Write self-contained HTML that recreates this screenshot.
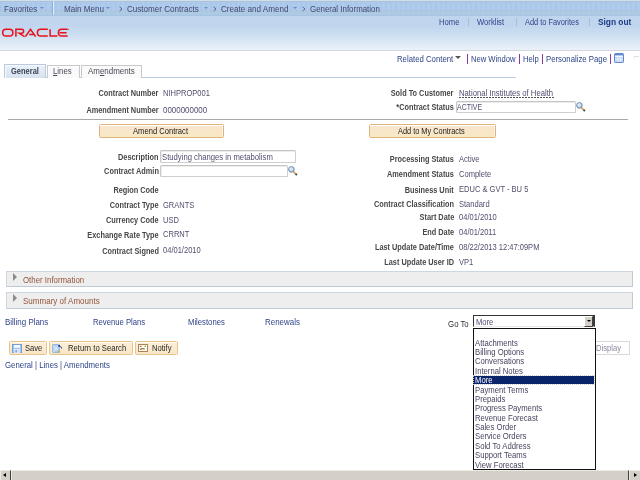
<!DOCTYPE html>
<html><head><meta charset="utf-8"><style>
html,body{margin:0;padding:0;background:#fff;width:640px;height:480px;overflow:hidden;position:relative}
.t{position:absolute;font-family:"Liberation Sans",sans-serif;white-space:nowrap}
.r{position:absolute;box-sizing:content-box}
.arr{position:absolute;width:0;height:0;border-left:2.2px solid transparent;border-right:2.2px solid transparent;border-top:2.2px solid #6a8dc4}
.arr2{position:absolute;width:0;height:0;border-left:3px solid transparent;border-right:3px solid transparent;border-top:3.5px solid #555}
.inp{position:absolute;box-sizing:border-box;border:1px solid #cfcfcf;border-top-color:#c4c4c4;border-left-color:#c8c8c8;background:#fff;border-radius:1.5px;box-shadow:inset 1px 1px 0 #ececec}
.btn{position:absolute;box-sizing:border-box;border:1px solid #e0b27e;background:linear-gradient(#f8e5cf,#f9e8c3);border-radius:1.5px;box-shadow:inset 0 1px 0 #fff,inset -1px 0 0 #fdf6e8}
.tb{position:absolute;box-sizing:border-box;border:1.5px solid #e6c48e;background:linear-gradient(#fcefd8,#f9e6c6);border-radius:1.5px;box-shadow:inset 0 1px 0 #fff8ee}
.sec{position:absolute;box-sizing:content-box;background:#eeeeee;border:1px solid #ccd5e0;border-right:1.5px solid #bfc8d6;border-bottom:1.5px solid #bfc8d6}
.tri{position:absolute;width:0;height:0;border-top:4.5px solid transparent;border-bottom:4.5px solid transparent;border-left:4.5px solid #8c8c8c}
.mag{position:absolute;width:9px;height:9px}
.mag:before{content:"";position:absolute;left:0;top:0;width:5px;height:5px;border-radius:50%;border:1px solid #4a7fb8;background:radial-gradient(circle at 35% 35%,#e8f4ff,#7fb2e0)}
.mag:after{content:"";position:absolute;left:5.5px;top:5px;width:4px;height:1.8px;background:#c88a3a;transform:rotate(45deg);transform-origin:0 0}
.sv{position:absolute;width:9px;height:8.5px;background:#6f9fd8;box-sizing:border-box;border:1px solid #4f7fc0}
.sv:before{content:"";position:absolute;left:1px;top:0;width:5px;height:3px;background:#e8f0fa}
.sv:after{content:"";position:absolute;left:2px;top:4.5px;width:3px;height:3px;background:#fff}
.rs{position:absolute;width:10px;height:10px}
.rs:before{content:"";position:absolute;left:0;top:1px;width:7px;height:7px;background:#9cc0e8;border:1px solid #5a86c0}
.rs:after{content:"";position:absolute;left:4px;top:4px;width:6px;height:2px;background:#444;transform:rotate(-45deg)}
.nt{position:absolute;width:9px;height:8px;box-sizing:border-box;border:1px solid #8a6a3a;background:#f4e4b8}
.nt:before{content:"";position:absolute;left:1px;top:2px;width:2px;height:1px;background:#333}
.nt:after{content:"";position:absolute;left:2px;top:4px;width:4px;height:1px;background:#333}
</style></head><body>
<div class="r" style="left:0px;top:0px;width:640px;height:1px;background:#cfdeea"></div>
<div class="r" style="left:0px;top:1px;width:640px;height:1px;background:#aac2da"></div>
<div class="r" style="left:0px;top:2px;width:640px;height:12.5px;background:linear-gradient(#afcbea 0,#acccee 40%,#b1c8ea 60%,#adcae4 75%,#adcae2 100%)"></div>
<div class="r" style="left:0px;top:2px;width:640px;height:11px;background-image:linear-gradient(90deg,rgba(150,160,220,0.2) 50%,transparent 50%);background-size:5px 3.5px;background-position:0 1.2px;-webkit-mask:linear-gradient(transparent 0 1.2px,#000 1.2px 2.2px,transparent 2.2px);-webkit-mask-size:100% 3.5px"></div>
<div class="r" style="left:0px;top:14.5px;width:640px;height:1.0px;background:#a9c4e2"></div>
<div class="t" style="left:4.328px;transform-origin:0 7.36px;top:4.94px;font-size:8.7px;line-height:8.7px;font-weight:normal;color:#444a70;transform:scale(0.93,1.0);">Favorites</div>
<div class="arr" style="left:40px;top:6.6px"></div><div class="r" style="left:52px;top:1px;width:1px;height:14px;background:#8eaed4"></div>
<div class="r" style="left:53px;top:1px;width:1px;height:14px;background:#e4eef8"></div>
<div class="t" style="left:63.628px;transform-origin:0 7.36px;top:4.94px;font-size:8.7px;line-height:8.7px;font-weight:normal;color:#444a70;transform:scale(0.93,1.0);">Main Menu</div>
<div class="arr" style="left:106px;top:6.6px"></div><svg class="r" style="left:118.8px;top:6px" width="4" height="6" viewBox="0 0 4 6"><path d="M0.5 0.8L3 3L0.5 5.2" fill="none" stroke="#4a5270" stroke-width="0.8"/></svg>
<div class="t" style="left:127.128px;transform-origin:0 7.36px;top:4.94px;font-size:8.7px;line-height:8.7px;font-weight:normal;color:#444a70;transform:scale(0.93,1.0);">Customer Contracts</div>
<div class="arr" style="left:204px;top:6.6px"></div><svg class="r" style="left:212.8px;top:6px" width="4" height="6" viewBox="0 0 4 6"><path d="M0.5 0.8L3 3L0.5 5.2" fill="none" stroke="#4a5270" stroke-width="0.8"/></svg>
<div class="t" style="left:220.628px;transform-origin:0 7.36px;top:4.94px;font-size:8.7px;line-height:8.7px;font-weight:normal;color:#444a70;transform:scale(0.93,1.0);">Create and Amend</div>
<div class="arr" style="left:293px;top:6.6px"></div><svg class="r" style="left:301.8px;top:6px" width="4" height="6" viewBox="0 0 4 6"><path d="M0.5 0.8L3 3L0.5 5.2" fill="none" stroke="#4a5270" stroke-width="0.8"/></svg>
<div class="t" style="left:309.636px;transform-origin:0 7.36px;top:4.94px;font-size:8.7px;line-height:8.7px;font-weight:normal;color:#444a70;transform:scale(0.91,1.0);">General Information</div>
<div class="r" style="left:0px;top:15.5px;width:640px;height:34.5px;background:linear-gradient(#bfd5ee 0,#c1d6ee 30%,#c9dcf0 50%,#d9e6f4 72%,#eaf1f9 100%)"></div>
<div class="r" style="left:0px;top:50px;width:640px;height:1px;background:#d3d7de"></div>
<svg class="r" style="left:0;top:24px" width="72" height="18" viewBox="0 0 72 18"><g fill="none" stroke="#e8101a" stroke-width="1.5"><rect x="2.7" y="5.35" width="10.2" height="6.6" rx="3.3"/><path d="M15.9 12.65V5.35H21.6A2 2 0 0 1 21.6 9.35H19.2L24.6 12.65"/><path d="M25.4 12.65L30.5 5.35L35.6 12.65M29.2 10.6H33.6"/><path d="M47.8 5.35H40.7A3.3 3.3 0 0 0 40.7 11.95H47.8"/><path d="M50.1 5.2V11.95H57.4"/><path d="M67.6 5.35H61.7A3.3 3.3 0 0 0 61.7 11.95H67.6M59.6 8.65H66.6"/></g><circle cx="68.6" cy="5.4" r="0.5" fill="#e3141c"/></svg>
<div class="t" style="left:438.64px;transform-origin:0 7.20px;top:18.30px;font-size:8.5px;line-height:8.5px;font-weight:normal;color:#2f4489;transform:scale(0.9,1.0);">Home</div>
<div class="r" style="left:468px;top:17.6px;width:1px;height:8.2px;background:#a9bed6"></div>
<div class="t" style="left:477.14px;transform-origin:0 7.20px;top:18.30px;font-size:8.5px;line-height:8.5px;font-weight:normal;color:#2f4489;transform:scale(0.9,1.0);">Worklist</div>
<div class="r" style="left:516px;top:17.6px;width:1px;height:8.2px;background:#a9bed6"></div>
<div class="t" style="left:525.3520000000001px;transform-origin:0 7.20px;top:18.30px;font-size:8.5px;line-height:8.5px;font-weight:normal;color:#2f4489;transform:scale(0.87,1.0);">Add to Favorites</div>
<div class="r" style="left:589px;top:17.6px;width:1px;height:8.2px;background:#a9bed6"></div>
<div class="t" style="left:597.608px;transform-origin:0 7.20px;top:18.30px;font-size:8.5px;line-height:8.5px;font-weight:bold;color:#1c3a86;transform:scale(0.98,1.0);">Sign out</div>
<div class="t" style="left:397.32px;transform-origin:0 6.94px;top:55.96px;font-size:8.2px;line-height:8.2px;font-weight:normal;color:#2f4489;transform:scale(0.95,1.0);">Related Content</div>
<div class="arr2" style="left:455.3px;top:56px"></div><div class="r" style="left:467px;top:54px;width:1px;height:10px;background:#8a3a9a"></div>
<div class="r" style="left:518.5px;top:54px;width:1.0px;height:10px;background:#8a3a9a"></div>
<div class="r" style="left:542px;top:54px;width:1px;height:10px;background:#8a3a9a"></div>
<div class="r" style="left:610px;top:54px;width:1px;height:10px;background:#8a3a9a"></div>
<div class="t" style="left:470.928px;transform-origin:0 6.94px;top:55.96px;font-size:8.2px;line-height:8.2px;font-weight:normal;color:#2f4489;transform:scale(0.93,1.0);">New Window</div>
<div class="t" style="left:522.8280000000001px;transform-origin:0 6.94px;top:55.96px;font-size:8.2px;line-height:8.2px;font-weight:normal;color:#2f4489;transform:scale(0.93,1.0);">Help</div>
<div class="t" style="left:546.22px;transform-origin:0 6.94px;top:55.96px;font-size:8.2px;line-height:8.2px;font-weight:normal;color:#2f4489;transform:scale(0.95,1.0);">Personalize Page</div>
<svg class="r" style="left:613.5px;top:52.5px" width="10" height="10" viewBox="0 0 10 10"><rect x="0.5" y="0.5" width="9" height="9" rx="0.8" fill="#c4d6f2" stroke="#5d88cf"/><rect x="1" y="1" width="8" height="1.6" fill="#5d88cf"/><rect x="1" y="2.6" width="8" height="1.2" fill="#fff"/><path d="M1 6.2H9M4 3.8V9M6.5 3.8V9" stroke="#eef4fc" stroke-width="0.8"/></svg>
<div class="r" style="left:634.2px;top:56px;width:4.5px;height:1px;background:#e2e2e2"></div>
<div class="r" style="left:634.2px;top:56px;width:0.7999999999999545px;height:2px;background:#e2e2e2"></div>
<div class="r" style="left:4px;top:77px;width:512px;height:1px;background:#bccae2"></div>
<div class="r" style="left:4px;top:63.5px;width:40px;height:13.5px;border:1px solid #b9c9de;border-bottom:none;background:linear-gradient(#eaf1f9,#d6e2f0);box-shadow:inset 1px 1px 0 #f6f9fd"></div>
<div class="t" style="left:11.12px;transform-origin:0 6.69px;top:68.31px;font-size:7.9px;line-height:7.9px;font-weight:bold;color:#3d4456;transform:scale(0.95,1.06);">General</div>
<div class="r" style="left:47px;top:65px;width:31px;height:12px;border:1px solid #c9c9c9;border-bottom:none;background:#fafafa;box-shadow:inset 1px 1px 0 #fff"></div>
<div class="t" style="left:53.419999999999995px;transform-origin:0 6.94px;top:68.06px;font-size:8.2px;line-height:8.2px;font-weight:normal;color:#4a4a5a;transform:scale(0.95,1.0);"><u>L</u>ines</div>
<div class="r" style="left:81px;top:65px;width:59px;height:12px;border:1px solid #c9c9c9;border-bottom:none;background:#fafafa"></div>
<div class="t" style="left:87.612px;transform-origin:0 6.94px;top:68.06px;font-size:8.2px;line-height:8.2px;font-weight:normal;color:#4a4a5a;transform:scale(0.97,1.0);">Am<u>e</u>ndments</div>
<div class="t" style="right:481.228px;text-align:right;transform-origin:100% 6.69px;top:89.71px;font-size:7.9px;line-height:7.9px;font-weight:bold;color:#474747;transform:scale(0.93,1.06);">Contract Number</div>
<div class="t" style="left:163.43200000000002px;transform-origin:0 6.94px;top:89.56px;font-size:8.2px;line-height:8.2px;font-weight:normal;color:#544d6e;transform:scale(0.92,1.0);">NIHPROP001</div>
<div class="t" style="right:481.228px;text-align:right;transform-origin:100% 6.69px;top:106.91px;font-size:7.9px;line-height:7.9px;font-weight:bold;color:#474747;transform:scale(0.93,1.06);">Amendment Number</div>
<div class="t" style="left:163.412px;transform-origin:0 6.94px;top:106.76px;font-size:8.2px;line-height:8.2px;font-weight:normal;color:#544d6e;transform:scale(0.97,1.0);">0000000000</div>
<div class="t" style="right:186.32799999999997px;text-align:right;transform-origin:100% 6.69px;top:89.71px;font-size:7.9px;line-height:7.9px;font-weight:bold;color:#474747;transform:scale(0.93,1.06);">Sold To Customer</div>
<div class="t" style="left:458.624px;transform-origin:0 6.94px;top:89.56px;font-size:8.2px;line-height:8.2px;font-weight:normal;color:#544d6e;transform:scale(0.94,1.0);">National Institutes of Health</div>
<div class="r" style="left:459px;top:97px;width:95px;height:1px;background:repeating-linear-gradient(90deg,#505050 0 2px,transparent 2px 3px)"></div>
<div class="t" style="right:186.32799999999997px;text-align:right;transform-origin:100% 6.69px;top:103.91px;font-size:7.9px;line-height:7.9px;font-weight:bold;color:#474747;transform:scale(0.93,1.06);">*Contract Status</div>
<div class="inp" style="left:455.5px;top:101.3px;width:120.3px;height:11.5px"></div>
<div class="t" style="left:456.66px;transform-origin:0 6.94px;top:103.76px;font-size:8.2px;line-height:8.2px;font-weight:normal;color:#544d6e;transform:scale(0.85,1.0);">ACTIVE</div>
<svg class="r" style="left:576.2px;top:101.8px" width="10" height="10" viewBox="0 0 10 10"><defs><radialGradient id="mg" cx="40%" cy="35%" r="70%"><stop offset="0" stop-color="#f2f8ff"/><stop offset="1" stop-color="#8fbde8"/></radialGradient></defs><path d="M5.6 5.8L8.4 8.6" stroke="#dca23a" stroke-width="1.7"/><path d="M7.6 7.8L8.9 9.1" stroke="#34467a" stroke-width="1.7"/><circle cx="3.4" cy="3.4" r="2.8" fill="url(#mg)" stroke="#6a7486" stroke-width="0.8"/></svg>
<div class="r" style="left:8px;top:119px;width:620px;height:1px;background:#a9a9a9"></div>
<div class="btn" style="left:99px;top:124px;width:125px;height:13.7px"></div>
<div class="t" style="left:133.028px;transform-origin:0 6.94px;top:127.56px;font-size:8.2px;line-height:8.2px;font-weight:normal;color:#222;transform:scale(0.93,1.0);">Amend Contract</div>
<div class="btn" style="left:369px;top:124px;width:127px;height:13.7px"></div>
<div class="t" style="left:398.34px;transform-origin:0 6.94px;top:127.56px;font-size:8.2px;line-height:8.2px;font-weight:normal;color:#222;transform:scale(0.9,1.0);">Add to My Contracts</div>
<div class="t" style="right:481.228px;text-align:right;transform-origin:100% 6.69px;top:153.51px;font-size:7.9px;line-height:7.9px;font-weight:bold;color:#474747;transform:scale(0.93,1.06);">Description</div>
<div class="inp" style="left:160px;top:150.2px;width:135.8px;height:12.6px"></div>
<div class="t" style="left:161.624px;transform-origin:0 6.94px;top:153.96px;font-size:8.2px;line-height:8.2px;font-weight:normal;color:#544d6e;transform:scale(0.94,1.0);">Studying changes in metabolism</div>
<div class="t" style="right:481.228px;text-align:right;transform-origin:100% 6.69px;top:168.41px;font-size:7.9px;line-height:7.9px;font-weight:bold;color:#474747;transform:scale(0.93,1.06);">Contract Admin</div>
<div class="inp" style="left:160px;top:165.2px;width:127.8px;height:12.3px"></div>
<svg class="r" style="left:288.4px;top:166.2px" width="10" height="10" viewBox="0 0 10 10"><defs><radialGradient id="mg" cx="40%" cy="35%" r="70%"><stop offset="0" stop-color="#f2f8ff"/><stop offset="1" stop-color="#8fbde8"/></radialGradient></defs><path d="M5.6 5.8L8.4 8.6" stroke="#dca23a" stroke-width="1.7"/><path d="M7.6 7.8L8.9 9.1" stroke="#34467a" stroke-width="1.7"/><circle cx="3.4" cy="3.4" r="2.8" fill="url(#mg)" stroke="#6a7486" stroke-width="0.8"/></svg>
<div class="t" style="right:481.228px;text-align:right;transform-origin:100% 6.69px;top:186.51px;font-size:7.9px;line-height:7.9px;font-weight:bold;color:#474747;transform:scale(0.93,1.06);">Region Code</div>
<div class="t" style="right:481.228px;text-align:right;transform-origin:100% 6.69px;top:201.91px;font-size:7.9px;line-height:7.9px;font-weight:bold;color:#474747;transform:scale(0.93,1.06);">Contract Type</div>
<div class="t" style="left:163.43200000000002px;transform-origin:0 6.94px;top:201.76px;font-size:8.2px;line-height:8.2px;font-weight:normal;color:#544d6e;transform:scale(0.92,1.0);">GRANTS</div>
<div class="t" style="right:481.228px;text-align:right;transform-origin:100% 6.69px;top:216.71px;font-size:7.9px;line-height:7.9px;font-weight:bold;color:#474747;transform:scale(0.93,1.06);">Currency Code</div>
<div class="t" style="left:163.43200000000002px;transform-origin:0 6.94px;top:216.56px;font-size:8.2px;line-height:8.2px;font-weight:normal;color:#544d6e;transform:scale(0.92,1.0);">USD</div>
<div class="t" style="right:481.228px;text-align:right;transform-origin:100% 6.69px;top:231.51px;font-size:7.9px;line-height:7.9px;font-weight:bold;color:#474747;transform:scale(0.93,1.06);">Exchange Rate Type</div>
<div class="t" style="left:163.43200000000002px;transform-origin:0 6.94px;top:231.36px;font-size:8.2px;line-height:8.2px;font-weight:normal;color:#544d6e;transform:scale(0.92,1.0);">CRRNT</div>
<div class="t" style="right:481.228px;text-align:right;transform-origin:100% 6.69px;top:247.51px;font-size:7.9px;line-height:7.9px;font-weight:bold;color:#474747;transform:scale(0.93,1.06);">Contract Signed</div>
<div class="t" style="left:163.43200000000002px;transform-origin:0 6.94px;top:247.36px;font-size:8.2px;line-height:8.2px;font-weight:normal;color:#544d6e;transform:scale(0.92,1.0);">04/01/2010</div>
<div class="t" style="right:186.228px;text-align:right;transform-origin:100% 6.69px;top:155.91px;font-size:7.9px;line-height:7.9px;font-weight:bold;color:#474747;transform:scale(0.93,1.06);">Processing Status</div>
<div class="t" style="left:458.632px;transform-origin:0 6.94px;top:155.76px;font-size:8.2px;line-height:8.2px;font-weight:normal;color:#544d6e;transform:scale(0.92,1.0);">Active</div>
<div class="t" style="right:186.228px;text-align:right;transform-origin:100% 6.69px;top:170.91px;font-size:7.9px;line-height:7.9px;font-weight:bold;color:#474747;transform:scale(0.93,1.06);">Amendment Status</div>
<div class="t" style="left:458.632px;transform-origin:0 6.94px;top:170.76px;font-size:8.2px;line-height:8.2px;font-weight:normal;color:#544d6e;transform:scale(0.92,1.0);">Complete</div>
<div class="t" style="right:186.228px;text-align:right;transform-origin:100% 6.69px;top:186.61px;font-size:7.9px;line-height:7.9px;font-weight:bold;color:#474747;transform:scale(0.93,1.06);">Business Unit</div>
<div class="t" style="left:458.632px;transform-origin:0 6.94px;top:186.46px;font-size:8.2px;line-height:8.2px;font-weight:normal;color:#544d6e;transform:scale(0.92,1.0);">EDUC &amp; GVT - BU 5</div>
<div class="t" style="right:186.228px;text-align:right;transform-origin:100% 6.69px;top:200.91px;font-size:7.9px;line-height:7.9px;font-weight:bold;color:#474747;transform:scale(0.93,1.06);">Contract Classification</div>
<div class="t" style="left:458.632px;transform-origin:0 6.94px;top:200.76px;font-size:8.2px;line-height:8.2px;font-weight:normal;color:#544d6e;transform:scale(0.92,1.0);">Standard</div>
<div class="t" style="right:186.228px;text-align:right;transform-origin:100% 6.69px;top:214.11px;font-size:7.9px;line-height:7.9px;font-weight:bold;color:#474747;transform:scale(0.93,1.06);">Start Date</div>
<div class="t" style="left:458.632px;transform-origin:0 6.94px;top:213.96px;font-size:8.2px;line-height:8.2px;font-weight:normal;color:#544d6e;transform:scale(0.92,1.0);">04/01/2010</div>
<div class="t" style="right:186.228px;text-align:right;transform-origin:100% 6.69px;top:228.71px;font-size:7.9px;line-height:7.9px;font-weight:bold;color:#474747;transform:scale(0.93,1.06);">End Date</div>
<div class="t" style="left:458.632px;transform-origin:0 6.94px;top:228.56px;font-size:8.2px;line-height:8.2px;font-weight:normal;color:#544d6e;transform:scale(0.92,1.0);">04/01/2011</div>
<div class="t" style="right:186.228px;text-align:right;transform-origin:100% 6.69px;top:243.71px;font-size:7.9px;line-height:7.9px;font-weight:bold;color:#474747;transform:scale(0.93,1.06);">Last Update Date/Time</div>
<div class="t" style="left:458.632px;transform-origin:0 6.94px;top:243.56px;font-size:8.2px;line-height:8.2px;font-weight:normal;color:#544d6e;transform:scale(0.92,1.0);">08/22/2013 12:47:09PM</div>
<div class="t" style="right:186.228px;text-align:right;transform-origin:100% 6.69px;top:258.71px;font-size:7.9px;line-height:7.9px;font-weight:bold;color:#474747;transform:scale(0.93,1.06);">Last Update User ID</div>
<div class="t" style="left:458.632px;transform-origin:0 6.94px;top:258.56px;font-size:8.2px;line-height:8.2px;font-weight:normal;color:#544d6e;transform:scale(0.92,1.0);">VP1</div>
<div class="sec" style="left:6px;top:271px;width:624.5px;height:13.60px"></div>
<div class="tri" style="left:13px;top:273px"></div>
<div class="t" style="left:22.616px;transform-origin:0 6.94px;top:276.86px;font-size:8.2px;line-height:8.2px;font-weight:normal;color:#93543a;transform:scale(0.96,1.0);">Other Information</div>
<div class="sec" style="left:6px;top:292.2px;width:624.5px;height:14.60px"></div>
<div class="tri" style="left:13px;top:294.2px"></div>
<div class="t" style="left:22.608px;transform-origin:0 6.94px;top:297.86px;font-size:8.2px;line-height:8.2px;font-weight:normal;color:#93543a;transform:scale(0.98,1.0);">Summary of Amounts</div>
<div class="t" style="left:5.112px;transform-origin:0 6.94px;top:319.36px;font-size:8.2px;line-height:8.2px;font-weight:normal;color:#2f4489;transform:scale(0.97,1.0);">Billing Plans</div>
<div class="t" style="left:92.624px;transform-origin:0 6.94px;top:319.36px;font-size:8.2px;line-height:8.2px;font-weight:normal;color:#2f4489;transform:scale(0.94,1.0);">Revenue Plans</div>
<div class="t" style="left:187.82399999999998px;transform-origin:0 6.94px;top:319.36px;font-size:8.2px;line-height:8.2px;font-weight:normal;color:#2f4489;transform:scale(0.94,1.0);">Milestones</div>
<div class="t" style="left:265.41200000000003px;transform-origin:0 6.94px;top:319.36px;font-size:8.2px;line-height:8.2px;font-weight:normal;color:#2f4489;transform:scale(0.97,1.0);">Renewals</div>
<div class="t" style="right:171.62px;text-align:right;transform-origin:100% 6.94px;top:320.56px;font-size:8.2px;line-height:8.2px;font-weight:normal;color:#2e2e2e;transform:scale(0.95,1.0);">Go To</div>
<div class="tb" style="left:9px;top:341px;width:37.5px;height:13.8px"></div>
<svg class="r" style="left:11.5px;top:343.6px" width="10" height="9.5" viewBox="0 0 10 9.5"><rect x="0.5" y="0.5" width="9" height="8.5" fill="#a6c6f0" stroke="#6a98dc" stroke-width="0.9"/><rect x="2" y="1" width="6" height="2.8" fill="#f6faff"/><rect x="2.2" y="5" width="5.6" height="4" fill="#eef4fd"/><rect x="3.4" y="5.7" width="1.4" height="2.8" fill="#6a98dc"/><rect x="5.6" y="5.7" width="1.2" height="2.8" fill="#b8d2f4"/></svg>
<div class="t" style="left:24.728px;transform-origin:0 6.94px;top:345.36px;font-size:8.2px;line-height:8.2px;font-weight:normal;color:#262626;transform:scale(0.93,1.0);">Save</div>
<div class="tb" style="left:49.2px;top:341px;width:83.8px;height:13.8px"></div>
<svg class="r" style="left:51.5px;top:343.5px" width="11" height="10" viewBox="0 0 11 10"><rect x="0.7" y="0.7" width="6.6" height="7.6" fill="#b4d2f4" stroke="#78a4dc" stroke-width="0.7"/><path d="M1.2 7.6L6.8 1.4M1.5 2L6 6.5" stroke="#eef6ff" stroke-width="0.9"/><path d="M5.8 6.3L7.4 8.6" stroke="#c8b030" stroke-width="1.2"/><path d="M7 2Q8.8 1.8 9.6 4" stroke="#2a3c7c" stroke-width="0.9" fill="none"/><circle cx="7" cy="1.9" r="0.9" fill="#1d2c66"/><circle cx="9.6" cy="4" r="0.6" fill="#2a3c9c"/></svg>
<div class="t" style="left:67.624px;transform-origin:0 6.94px;top:345.36px;font-size:8.2px;line-height:8.2px;font-weight:normal;color:#262626;transform:scale(0.94,1.0);">Return to Search</div>
<div class="tb" style="left:135px;top:341px;width:42.8px;height:13.8px"></div>
<svg class="r" style="left:138px;top:344px" width="10" height="8" viewBox="0 0 10 8"><rect x="0.5" y="0.5" width="9" height="7" fill="#fff" stroke="#b08050"/><path d="M1.8 2.3H3.5" stroke="#8a5a2a" stroke-width="1"/><circle cx="7.2" cy="2.2" r="0.8" fill="#40b040"/><path d="M2 5.6Q4 4.2 6.8 5" stroke="#9a6530" stroke-width="1.2" fill="none"/></svg>
<div class="t" style="left:152.428px;transform-origin:0 6.94px;top:345.36px;font-size:8.2px;line-height:8.2px;font-weight:normal;color:#262626;transform:scale(0.93,1.0);">Notify</div>
<div class="r" style="left:560px;top:341.2px;width:68px;height:11.8px;border:1px solid #d8d8d8;background:#fff"></div>
<div class="t" style="left:595.628px;transform-origin:0 6.94px;top:345.26px;font-size:8.2px;line-height:8.2px;font-weight:normal;color:#8a8aa0;transform:scale(0.93,1.0);">Display</div>
<div class="t" style="left:5.118px;transform-origin:0 6.94px;top:362.36px;font-size:8.2px;line-height:8.2px;font-weight:normal;color:#2f4489;transform:scale(0.955,1.0);">General | Lines | Amendments</div>
<div class="r" style="left:473px;top:315px;width:118.75px;height:9.6px;border-top:1px solid #333;border-left:1px solid #333;border-right:2px solid #3a3a3a;border-bottom:1px solid #e8e8e8;background:#fff"></div>
<div class="t" style="left:475.928px;transform-origin:0 6.94px;top:319.36px;font-size:8.2px;line-height:8.2px;font-weight:normal;color:#544d6e;transform:scale(0.93,1.0);">More</div>
<div class="r" style="left:584.1px;top:316px;width:7.2px;height:8.6px;background:#d4d0c8;border:1px solid;border-color:#fff #404040 #404040 #fff"></div>
<div class="r" style="left:587.2px;top:319.9px;width:0;height:0;border-left:2.3px solid transparent;border-right:2.3px solid transparent;border-top:2.6px solid #000"></div>
<div class="r" style="left:473px;top:328.3px;width:121px;height:140px;border:1px solid #111;background:#fff"></div>
<div class="t" style="left:474.824px;transform-origin:0 6.94px;top:339.66px;font-size:8.2px;line-height:8.2px;font-weight:normal;color:#4a4460;transform:scale(0.94,1.0);">Attachments</div>
<div class="t" style="left:474.824px;transform-origin:0 6.94px;top:349.04px;font-size:8.2px;line-height:8.2px;font-weight:normal;color:#4a4460;transform:scale(0.94,1.0);">Billing Options</div>
<div class="t" style="left:474.824px;transform-origin:0 6.94px;top:358.42px;font-size:8.2px;line-height:8.2px;font-weight:normal;color:#4a4460;transform:scale(0.94,1.0);">Conversations</div>
<div class="t" style="left:474.824px;transform-origin:0 6.94px;top:367.80px;font-size:8.2px;line-height:8.2px;font-weight:normal;color:#4a4460;transform:scale(0.94,1.0);">Internal Notes</div>
<div class="r" style="left:473.8px;top:376.2px;width:120.19999999999999px;height:8.300000000000011px;background:#0a246a;outline:0.5px dotted #ccc"></div>
<div class="t" style="left:474.824px;transform-origin:0 6.94px;top:377.18px;font-size:8.2px;line-height:8.2px;font-weight:normal;color:#fff;transform:scale(0.94,1.0);">More</div>
<div class="t" style="left:474.824px;transform-origin:0 6.94px;top:386.56px;font-size:8.2px;line-height:8.2px;font-weight:normal;color:#4a4460;transform:scale(0.94,1.0);">Payment Terms</div>
<div class="t" style="left:474.824px;transform-origin:0 6.94px;top:395.94px;font-size:8.2px;line-height:8.2px;font-weight:normal;color:#4a4460;transform:scale(0.94,1.0);">Prepaids</div>
<div class="t" style="left:474.824px;transform-origin:0 6.94px;top:405.32px;font-size:8.2px;line-height:8.2px;font-weight:normal;color:#4a4460;transform:scale(0.94,1.0);">Progress Payments</div>
<div class="t" style="left:474.824px;transform-origin:0 6.94px;top:414.70px;font-size:8.2px;line-height:8.2px;font-weight:normal;color:#4a4460;transform:scale(0.94,1.0);">Revenue Forecast</div>
<div class="t" style="left:474.824px;transform-origin:0 6.94px;top:424.08px;font-size:8.2px;line-height:8.2px;font-weight:normal;color:#4a4460;transform:scale(0.94,1.0);">Sales Order</div>
<div class="t" style="left:474.824px;transform-origin:0 6.94px;top:433.46px;font-size:8.2px;line-height:8.2px;font-weight:normal;color:#4a4460;transform:scale(0.94,1.0);">Service Orders</div>
<div class="t" style="left:474.824px;transform-origin:0 6.94px;top:442.84px;font-size:8.2px;line-height:8.2px;font-weight:normal;color:#4a4460;transform:scale(0.94,1.0);">Sold To Address</div>
<div class="t" style="left:474.824px;transform-origin:0 6.94px;top:452.22px;font-size:8.2px;line-height:8.2px;font-weight:normal;color:#4a4460;transform:scale(0.94,1.0);">Support Teams</div>
<div class="t" style="left:474.824px;transform-origin:0 6.94px;top:461.60px;font-size:8.2px;line-height:8.2px;font-weight:normal;color:#4a4460;transform:scale(0.94,1.0);">View Forecast</div>
<div class="r" style="left:0px;top:470px;width:640px;height:10px;background:#d4d0c8"></div>
<div class="r" style="left:0;top:470px;width:8.5px;height:8.5px;background:#d4d0c8;border:1px solid;border-color:#eceae4 #404040 #404040 #eceae4"></div>
<div class="r" style="left:2.6px;top:472.6px;width:0;height:0;border-top:2.2px solid transparent;border-bottom:2.2px solid transparent;border-right:3.5px solid #000"></div>
<div class="r" style="left:10.5px;top:470px;width:616.5px;height:8.5px;background:#d4d0c8;border:1px solid;border-color:#eceae4 #404040 #404040 #eceae4"></div>
<div class="r" style="left:629px;top:470px;width:12px;height:8.5px;background:#d4d0c8;border:1px solid;border-color:#eceae4 #404040 #404040 #eceae4"></div>
<div class="r" style="left:634.2px;top:472.6px;width:0;height:0;border-top:2.2px solid transparent;border-bottom:2.2px solid transparent;border-left:3.5px solid #000"></div>
</body></html>
